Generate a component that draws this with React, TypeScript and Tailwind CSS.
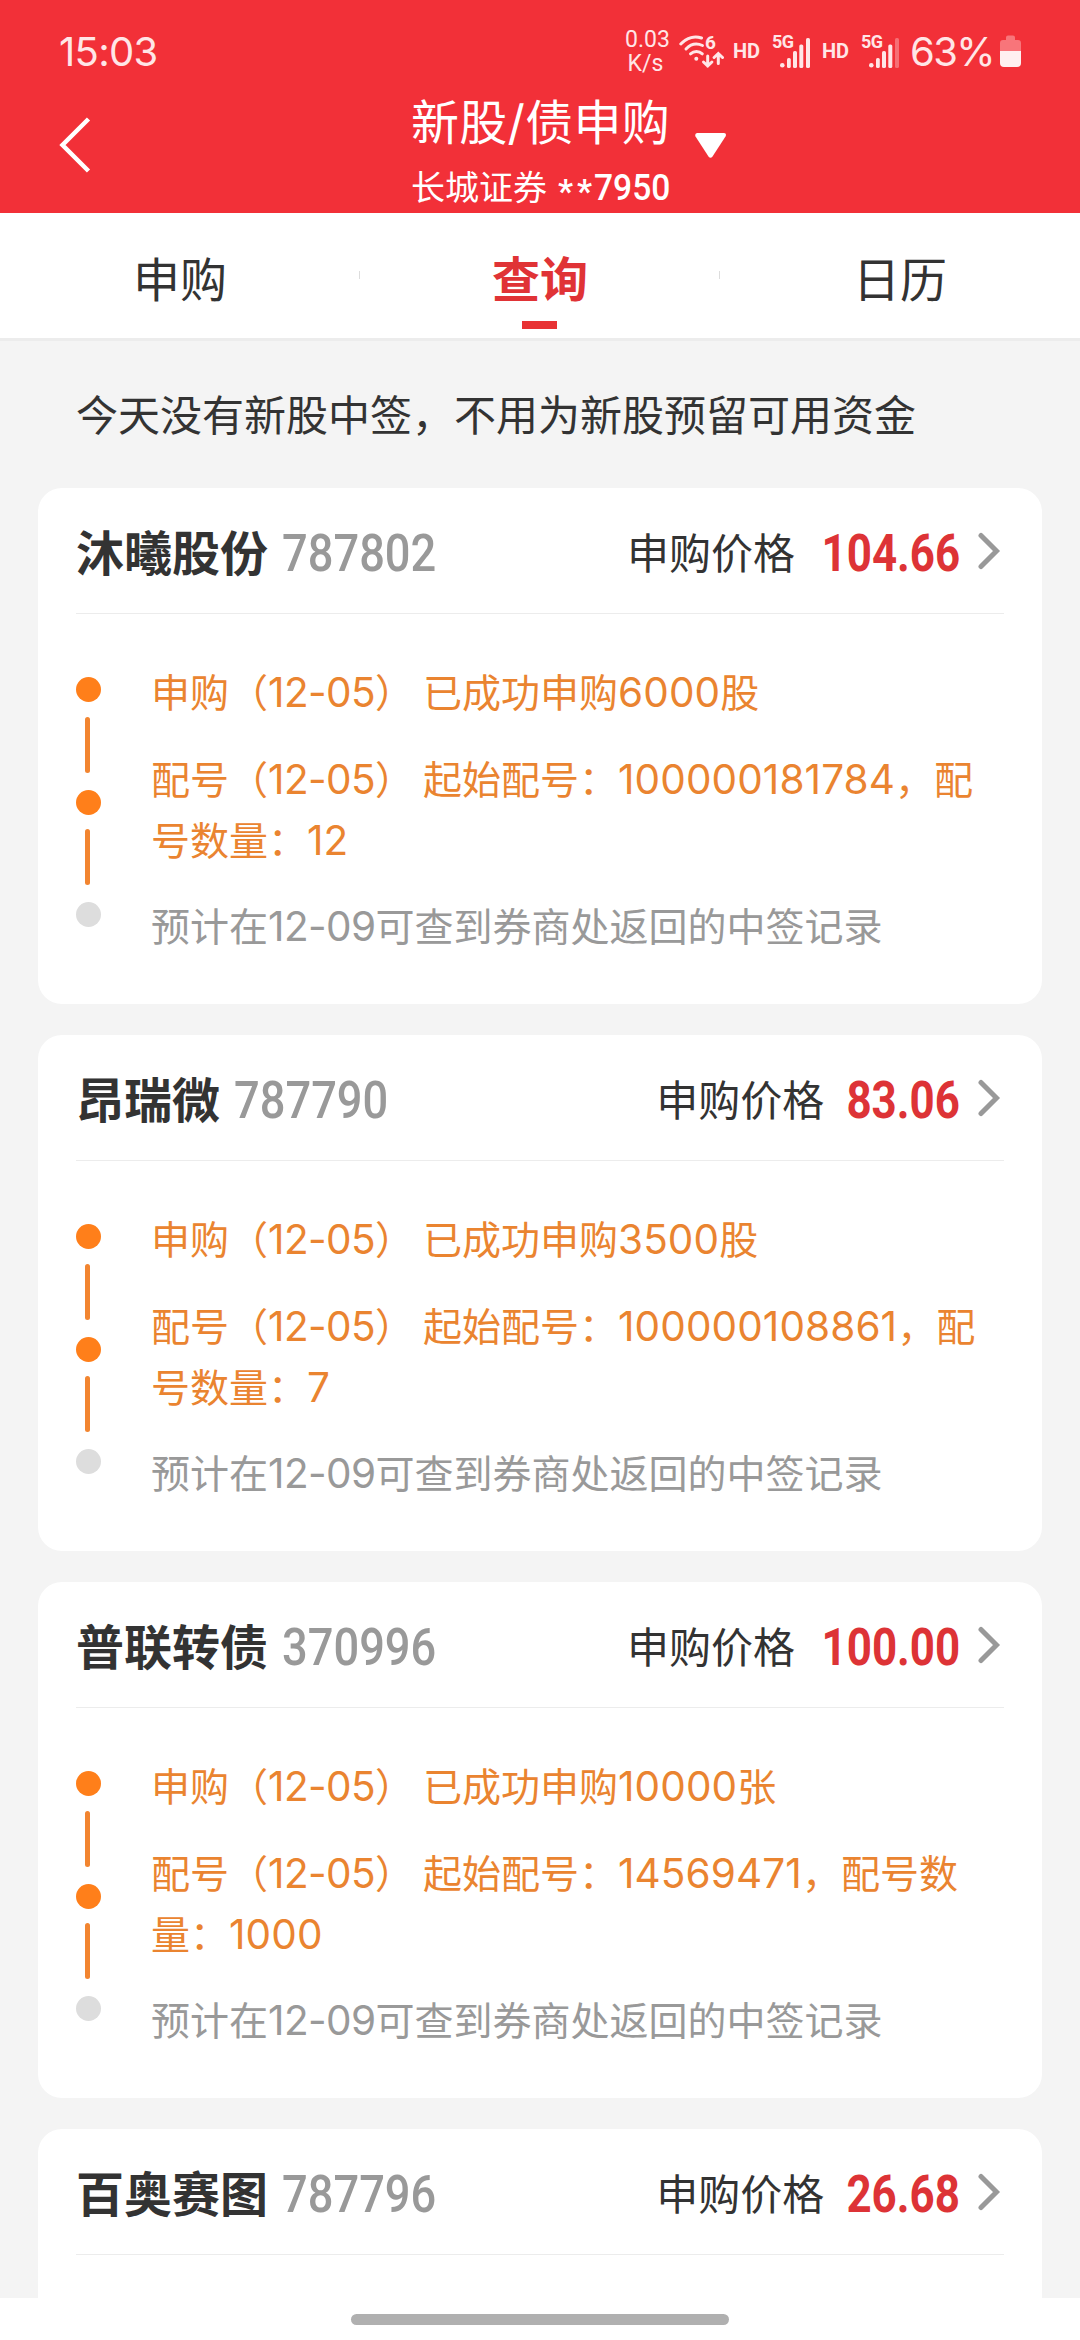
import React from "react";

type Item = { name: string; code: string; price: string; applied?: string; allot?: string[] };

const items: Item[] = [
  { name: "沐曦股份", code: "787802", price: "104.66", applied: "已成功申购6000股", allot: ["起始配号：100000181784，配", "号数量：12"] },
  { name: "昂瑞微", code: "787790", price: "83.06", applied: "已成功申购3500股", allot: ["起始配号：100000108861，配", "号数量：7"] },
  { name: "普联转债", code: "370996", price: "100.00", applied: "已成功申购10000张", allot: ["起始配号：14569471，配号数", "量：1000"] },
  { name: "百奥赛图", code: "787796", price: "26.68" },
];

function Mixed({ text }: { text: string }) {
  return (
    <>
      {text.split(/([0-9-]+)/).map((part, i) =>
        i % 2 ? (
          <span key={i} className={part.includes("-") ? "text-[40.5px] leading-none tracking-[-0.6px]" : "text-[40.5px] leading-none tracking-[0.1px]"}>
            {part}
          </span>
        ) : (
          part
        ),
      )}
    </>
  );
}

function Signal({ faded }: { faded?: boolean }) {
  return (
    <div className="relative h-[60px] w-[40px]">
      <span className="absolute left-0 top-[7px] text-[18px] font-bold leading-[20px] tracking-[-0.5px]">5G</span>
      <svg width="31" height="30" viewBox="0 0 31 30" className="absolute left-[8px] top-[13px]" fill="#ffe6e7">
        <circle cx="2.3" cy="27.3" r="2.3" />
        <rect x="7" y="20" width="3.8" height="10" rx="1.6" />
        <rect x="13" y="13" width="4" height="17" rx="1.6" />
        <rect x="19.3" y="6.5" width="4" height="23.5" rx="1.6" />
        <rect x="26" y="0" width="4" height="30" rx="1.6" opacity={faded ? 0.35 : 1} />
      </svg>
    </div>
  );
}

function StatusBar() {
  return (
    <div className="flex h-[100px] items-start pl-[59px] pt-[25px] font-['Roboto',sans-serif] text-[#ffe6e7]">
      <div className="mt-[2px] w-[566px] font-['Inter',sans-serif] text-[40px] leading-[50px] tracking-[-0.7px]">15:03</div>
      <div className="mt-[3px] w-[41px] text-center text-[23px] leading-[23.5px]">
        <div>0.03</div>
        <div>K/s</div>
      </div>
      <div className="relative ml-[12px] mt-[10px] h-[36px] w-[46px]">
        <svg width="46" height="36" viewBox="0 0 46 36" fill="none" stroke="#ffe6e7" strokeWidth="3" strokeLinecap="round">
          <path d="M2.8 9C9 2.300 17 0.800 23.500 3" />
          <path d="M8 14C13 8.800 19 8 24.500 10.500" />
          <path d="M12.500 18.800C16 15.800 21 15.800 24.300 18.800" />
          <circle cx="18.300" cy="23.700" r="2" fill="#ffe6e7" stroke="none" />
          <path d="M29.700 21V31M25.500 27L29.700 31L33.900 27" />
          <path d="M40.300 28.500V18.500M36.100 22.500L40.300 18.500L44.500 22.500" />
        </svg>
        <span className="absolute left-[27px] top-[-3px] text-[19px] font-bold leading-[22px]">6</span>
      </div>
      <div className="ml-[9px] mt-[15px] w-[39px] text-[20px] font-bold leading-[23px] tracking-[-0.2px]">HD</div>
      <Signal />
      <div className="ml-[10px] mt-[15px] w-[39px] text-[20px] font-bold leading-[23px] tracking-[-0.2px]">HD</div>
      <Signal faded />
      <div className="ml-[9px] mt-[2px] w-[90px] whitespace-nowrap font-['Inter',sans-serif] text-[40px] leading-[50px] tracking-[-1.6px]">63%</div>
      <svg width="22" height="33" viewBox="0 0 22 33" className="mt-[10px]">
        <path d="M6 5V2.500Q6 0.500 8 0.500H13Q15 0.500 15 2.500V5H18Q21 5 21 8V16H0V8Q0 5 3 5Z" fill="#f8757a" />
        <path d="M0 16H21V28Q21 32 17 32H4Q0 32 0 28Z" fill="#fff0f0" />
      </svg>
    </div>
  );
}

function Header() {
  return (
    <header className="relative h-[213px] bg-[#f23038] text-white">
      <StatusBar />
      <svg width="34" height="58" viewBox="0 0 34 58" className="absolute left-[58px] top-[116px]" fill="none" stroke="#fff" strokeWidth="4.500">
        <path d="M30.500 3L4.500 29L30.500 55" />
      </svg>
      <div className="absolute left-[411px] top-[92px]">
        <div className="whitespace-nowrap text-[48px] leading-[62px] tracking-[0.3px]">新股/债申购</div>
        <div className="mt-[3px] flex h-[62px] items-center whitespace-nowrap text-[34px] leading-[62px]">
          <span className="w-[147px]">长城证券</span>
          <span className="w-[36px] translate-y-[4px] font-['Roboto'] text-[33px] font-bold tracking-[4px]">**</span>
          <span className="origin-left scale-x-[0.92] font-['Roboto'] text-[36.500px] font-medium">7950</span>
        </div>
      </div>
      <svg width="32" height="26" viewBox="0 0 32 26" className="absolute left-[695px] top-[133px]" fill="#fff">
        <path d="M2 0H29Q32 0.500 30.500 3.500L17.500 23.500Q15.500 26 13.500 23.500L0.500 3.500Q-0.500 0.500 2 0Z" />
      </svg>
    </header>
  );
}

function Tabs() {
  return (
    <nav className="grid h-[128px] grid-cols-3 items-start border-b-[3px] border-[#ececec] bg-white text-center text-[47px] leading-[134px] text-[#333]">
      <div className="relative">
        申购
        <i className="absolute right-0 top-[58px] h-[8px] w-px bg-[#ddd]" />
      </div>
      <div className="relative text-[48px] font-bold text-[#e03336]">
        查询
        <i className="absolute left-[162px] top-[108px] h-[8px] w-[35px] bg-[#e83234]" />
        <i className="absolute right-0 top-[58px] h-[8px] w-px bg-[#ddd]" />
      </div>
      <div>日历</div>
    </nav>
  );
}

function Timeline({ applied, allot }: { applied: string; allot: string[] }) {
  return (
    <div className="flex pt-[47px]">
      <div className="flex w-[75px] flex-col pt-[16px]">
        <i className="size-[25px] rounded-full bg-[#ff7f1a]" />
        <i className="ml-[9px] mt-[15px] h-[56px] w-[5px] rounded-full bg-[#f28530]" />
        <i className="mt-[17px] size-[25px] rounded-full bg-[#ff7f1a]" />
        <i className="ml-[9px] mt-[14px] h-[56px] w-[5px] rounded-full bg-[#f28530]" />
        <i className="mt-[17px] size-[25px] rounded-full bg-[#ddd]" />
      </div>
      <div className="pt-px whitespace-nowrap text-[39px] leading-[61px] text-[#ea8430]">
        <p>
          <Mixed text="申购（12-05）" />
          <span className="inline-block w-[9px]" />
          <Mixed text={applied} />
        </p>
        <p className="mt-[26px]">
          <Mixed text="配号（12-05）" />
          <span className="inline-block w-[9px]" />
          <Mixed text={allot[0]} />
          <br />
          <Mixed text={allot[1]} />
        </p>
        <p className="mt-[25px] text-[#999]">
          <Mixed text="预计在12-09可查到券商处返回的中签记录" />
        </p>
      </div>
    </div>
  );
}

function Card({ item }: { item: Item }) {
  return (
    <section className="h-[516px] shrink-0 rounded-[24px] bg-white px-[38px]">
      <div className="flex h-[126px] items-center whitespace-nowrap border-b border-[#ececec] leading-none">
        <h2 className="pt-[6px] text-[48px] font-bold text-[#333]">{item.name}</h2>
        <span className="ml-[14px] origin-left scale-x-[0.887] pt-[5px] font-['Roboto'] text-[51px] font-medium text-[#999]">{item.code}</span>
        <span className="ml-auto pt-[6px] text-[42px] text-[#333]">申购价格</span>
        <span className="ml-[4px] origin-right scale-x-[0.86] pt-[5px] font-['Roboto'] text-[51px] font-bold text-[#dd3336]">{item.price}</span>
        <svg width="24" height="40" viewBox="0 0 24 40" className="ml-[18px] mr-[2px]" fill="none" stroke="#999" strokeWidth="5" strokeLinecap="round">
          <path d="M3 4.500L18.500 20L3 35.500" />
        </svg>
      </div>
      {item.applied && item.allot && <Timeline applied={item.applied} allot={item.allot} />}
    </section>
  );
}

export default function App() {
  return (
    <div className="flex h-[2340px] w-[1080px] flex-col overflow-hidden bg-[#f4f4f4] font-['Inter','Noto_Sans_CJK_SC',sans-serif]">
      <Header />
      <Tabs />
      <div className="h-[1957px] overflow-hidden px-[38px]">
        <p className="h-[147px] pl-[38px] text-[42px] leading-[150px] text-[#333]">今天没有新股中签，不用为新股预留可用资金</p>
        <div className="flex flex-col gap-[31px]">
          {items.map((item) => (
            <Card key={item.code} item={item} />
          ))}
        </div>
      </div>
      <footer className="flex h-[42px] justify-center bg-white pt-[16px]">
        <div className="h-[11px] w-[378px] rounded-full bg-[#b0b0b0]" />
      </footer>
    </div>
  );
}
